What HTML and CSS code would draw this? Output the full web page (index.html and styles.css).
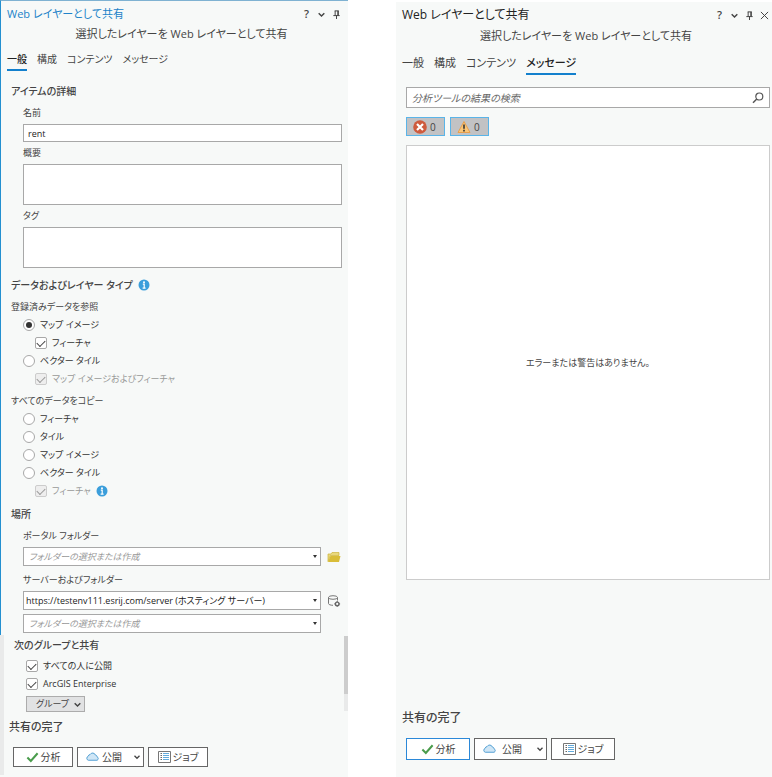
FILE: index.html
```html
<!DOCTYPE html>
<html lang="ja">
<head>
    <meta charset="UTF-8">
    <meta name="viewport" content="width=device-width, initial-scale=1.0">
    <title>Web レイヤーとして共有</title>
    <link rel="stylesheet" href="styles.css">
</head>
<body>
    <!-- shared icons -->
    <svg class="sprite" aria-hidden="true">
        <symbol id="chevron" viewBox="0 0 8 8"><path d="M1.500 2.800l2.500 2.500 2.500-2.500" fill="none" stroke="currentColor" stroke-width="1.300"/></symbol>
        <symbol id="pin" viewBox="0 0 10 10"><path d="M3 1h4.500M3.500 1v5M6.500 1v5M7 1v5M1.500 6.200h7M5 6v4" fill="none" stroke="currentColor" stroke-width="1.100"/></symbol>
        <symbol id="close" viewBox="0 0 10 10"><path d="M1 1l8 8M9 1L1 9" fill="none" stroke="currentColor" stroke-width="1.100"/></symbol>
        <symbol id="info" viewBox="0 0 12 12"><circle cx="6" cy="6" r="5.500" fill="#3b9edb"/><circle cx="6" cy="3.200" r="1" fill="#fff"/><path d="M4.800 5.200H6.200V9M4.600 9.200h3" fill="none" stroke="#fff" stroke-width="1.200"/></symbol>
        <symbol id="check" viewBox="0 0 14 12"><path d="M1.500 6.500l3.700 3.700L12.500 2" fill="none" stroke="#4a9c4c" stroke-width="2.200"/></symbol>
        <symbol id="cloud" viewBox="0 0 14 10"><path d="M2.500 8.500a2.200 2.200 0 0 1-.2-4.200A2.500 2.500 0 0 1 4.500 2.300a3 3 0 0 1 5.500.5 2.200 2.200 0 0 1 1.900 2A2 2 0 0 1 12 8.500z" fill="#cfe6f6" stroke="#4a9bd0"/></symbol>
        <symbol id="list" viewBox="0 0 13 12"><path d="M.5.5h12v11H.5z" fill="#fff" stroke="#777"/><path d="M2.500 2.500h1.500M2.500 4.500h1.500M2.500 6.500h1.500M2.500 8.500h1.500" stroke="#666"/><path d="M5 2.500h6M5 4.500h6M5 6.500h6M5 8.500h6" stroke="#62abdc"/></symbol>
        <symbol id="search" viewBox="0 0 12 12"><circle cx="7.300" cy="4.500" r="3.500" fill="none" stroke="#555" stroke-width="1.200"/><path d="M4.800 7L1 10.800" stroke="#555" stroke-width="1.500"/></symbol>
        <symbol id="error" viewBox="0 0 14 14"><circle cx="7" cy="7" r="6.800" fill="#ce5a3d"/><path d="M4 4l6 6M10 4l-6 6" stroke="#fff" stroke-width="2.200"/></symbol>
        <symbol id="warning" viewBox="0 0 14 14"><path d="M7 1.500l6 11H1z" fill="#fbc678" stroke="#e9a04c" stroke-linejoin="round"/><path d="M7 4.500v4.300M7 9.800v1.700" stroke="#333" stroke-width="1.600"/></symbol>
        <symbol id="folder" viewBox="0 0 14 11"><path d="M1 10V2.500h3L5 1h7v3H3.500z" fill="#e9d87c" stroke="#cdb53b" stroke-width=".7"/><path d="M1 10.500L3.500 4.500H13.500L12 10.500z" fill="#d9bd38"/></symbol>
        <symbol id="database" viewBox="0 0 13 12"><path d="M1 2.500v6c0 1 2 1.800 4.500 1.800M10 2.500v3" fill="none" stroke="#777"/><ellipse cx="5.500" cy="2.500" rx="4.500" ry="1.800" fill="none" stroke="#777"/><circle cx="9.700" cy="8.900" r="1.800" fill="none" stroke="#666" stroke-width="1.400"/><path d="M9.700 6v1M9.700 10.800v1M6.800 8.900h1M11.600 8.900h1" stroke="#666"/></symbol>
    </svg>

    <main class="panes">
        <section class="pane pane-general">
            <div class="pane-main">
                <header class="pane-header">
                    <h1>Web レイヤーとして共有</h1>
                    <div class="window-tools">
                        <button type="button" aria-label="ヘルプ">?</button>
                        <button type="button" aria-label="メニュー"><svg><use href="#chevron"/></svg></button>
                        <button type="button" aria-label="ピン留め"><svg><use href="#pin"/></svg></button>
                    </div>
                </header>
                <p class="subtitle">選択したレイヤーを Web レイヤーとして共有</p>
                <nav class="tabs">
                    <button type="button" class="tab active">一般</button>
                    <button type="button" class="tab">構成</button>
                    <button type="button" class="tab">コンテンツ</button>
                    <button type="button" class="tab">メッセージ</button>
                </nav>

                <form class="settings">
                    <h2>アイテムの詳細</h2>
                    <div class="fields">
                        <label for="name">名前</label>
                        <input type="text" id="name" value="rent">
                        <label for="summary">概要</label>
                        <textarea id="summary"></textarea>
                        <label for="tags">タグ</label>
                        <textarea id="tags"></textarea>
                    </div>

                    <h2>データおよびレイヤー タイプ <svg class="info"><use href="#info"/></svg></h2>
                    <fieldset>
                        <legend>登録済みデータを参照</legend>
                        <label class="option"><input type="radio" name="layerType" checked>マップ イメージ</label>
                        <label class="option nested"><input type="checkbox" checked>フィーチャ</label>
                        <label class="option"><input type="radio" name="layerType">ベクター タイル</label>
                        <label class="option nested disabled"><input type="checkbox" checked disabled>マップ イメージおよびフィーチャ</label>
                    </fieldset>
                    <fieldset>
                        <legend>すべてのデータをコピー</legend>
                        <label class="option"><input type="radio" name="layerType">フィーチャ</label>
                        <label class="option"><input type="radio" name="layerType">タイル</label>
                        <label class="option"><input type="radio" name="layerType">マップ イメージ</label>
                        <label class="option"><input type="radio" name="layerType">ベクター タイル</label>
                        <label class="option nested disabled"><input type="checkbox" checked disabled>フィーチャ <svg class="info"><use href="#info"/></svg></label>
                    </fieldset>

                    <h2>場所</h2>
                    <div class="location">
                        <label for="portalFolder">ポータル フォルダー</label>
                        <div class="select-row">
                            <div class="select placeholder">
                                <select id="portalFolder"><option>フォルダーの選択または作成</option></select>
                            </div>
                            <button type="button" class="icon-button" aria-label="フォルダーの作成"><svg><use href="#folder"/></svg></button>
                        </div>
                        <label for="server">サーバーおよびフォルダー</label>
                        <div class="select-row">
                            <div class="select">
                                <select id="server"><option>https://testenv111.esrij.com/server (ホスティング サーバー)</option></select>
                            </div>
                            <button type="button" class="icon-button" aria-label="データ ストアの管理"><svg><use href="#database"/></svg></button>
                        </div>
                        <div class="select-row">
                            <div class="select placeholder">
                                <select aria-label="サーバー フォルダー"><option>フォルダーの選択または作成</option></select>
                            </div>
                            <span class="icon-button"></span>
                        </div>
                    </div>
                </form>
            </div>

            <div class="pane-bottom">
                <div class="sharing">
                    <h2>次のグループと共有</h2>
                    <label class="option"><input type="checkbox" checked>すべての人に公開</label>
                    <label class="option"><input type="checkbox" checked>ArcGIS Enterprise</label>
                    <button type="button" class="group-button">グループ <svg><use href="#chevron"/></svg></button>
                </div>
                <footer>
                    <h2>共有の完了</h2>
                    <div class="actions">
                        <button type="button"><svg><use href="#check"/></svg>分析</button>
                        <button type="button" class="split"><svg><use href="#cloud"/></svg>公開<svg class="arrow"><use href="#chevron"/></svg></button>
                        <button type="button"><svg><use href="#list"/></svg>ジョブ</button>
                    </div>
                </footer>
            </div>
            <div class="scrollbar"></div>
        </section>

        <section class="pane pane-messages">
            <header class="pane-header">
                <h1>Web レイヤーとして共有</h1>
                <div class="window-tools">
                    <button type="button" aria-label="ヘルプ">?</button>
                    <button type="button" aria-label="メニュー"><svg><use href="#chevron"/></svg></button>
                    <button type="button" aria-label="ピン留め"><svg><use href="#pin"/></svg></button>
                    <button type="button" aria-label="閉じる"><svg><use href="#close"/></svg></button>
                </div>
            </header>
            <p class="subtitle">選択したレイヤーを Web レイヤーとして共有</p>
            <nav class="tabs">
                <button type="button" class="tab">一般</button>
                <button type="button" class="tab">構成</button>
                <button type="button" class="tab">コンテンツ</button>
                <button type="button" class="tab active">メッセージ</button>
            </nav>

            <div class="search">
                <input type="text" aria-label="検索" placeholder="分析ツールの結果の検索">
                <svg><use href="#search"/></svg>
            </div>
            <div class="filters">
                <button type="button"><svg><use href="#error"/></svg>0</button>
                <button type="button"><svg><use href="#warning"/></svg>0</button>
            </div>
            <div class="results">エラーまたは警告はありません。</div>

            <footer>
                <h2>共有の完了</h2>
                <div class="actions">
                    <button type="button" class="primary"><svg><use href="#check"/></svg>分析</button>
                    <button type="button" class="split"><svg><use href="#cloud"/></svg>公開<svg class="arrow"><use href="#chevron"/></svg></button>
                    <button type="button"><svg><use href="#list"/></svg>ジョブ</button>
                </div>
            </footer>
        </section>
    </main>
</body>
</html>
```
FILE: styles.css
```css
:root {
    --accent: #1380cd;
    --pane-bg: #f7f9f8;
    --text: #444;
    --muted: #999;
    --field-border: #a8a8a8;
}

* {
    box-sizing: border-box;
}

body {
    margin: 0;
    background: white;
    color: var(--text);
    font-family: "Open Sans", "Noto Sans CJK JP", sans-serif;
    font-size: 9px;
    line-height: 18px;
    font-feature-settings: "palt";
}

button,
input,
textarea,
select {
    margin: 0;
    font: inherit;
    font-feature-settings: inherit;
    color: inherit;
}

button {
    padding: 0;
    border: none;
    background: none;
    white-space: nowrap;
}

h1, h2, p {
    margin: 0;
}

h2 {
    font-size: 10px;
    font-weight: 500;
    line-height: 20px;
}

.sprite {
    display: none;
}

.panes {
    display: grid;
    grid-template-columns: 348fr 376fr;
    column-gap: 48px;
    min-height: 100vh;
}

.pane {
    background: var(--pane-bg);
}

/* Header */
.pane-header {
    display: flex;
    justify-content: space-between;
    align-items: center;
    height: 20px;
}

h1 {
    font-size: 11px;
    font-weight: 400;
    line-height: 20px;
}

.window-tools {
    display: flex;
    align-items: center;
    gap: 4px;
}

.window-tools button {
    display: flex;
    justify-content: center;
    align-items: center;
    width: 11px;
    height: 16px;
    font-size: 11px;
    font-weight: 600;
}

.window-tools svg {
    width: 9px;
    height: 9px;
}

.subtitle {
    padding-left: 14px;
    font-size: 11px;
    line-height: 20px;
    text-align: center;
}

.tabs {
    display: flex;
    gap: 10px;
}

.tab {
    border-bottom: 2px solid transparent;
    font-size: 10px;
    line-height: 20px;
}

.tab.active {
    border-color: var(--accent);
    font-weight: 500;
    color: #222;
}

/* General pane */
.pane-general {
    position: relative;
}

.pane-main {
    padding: 3px 6px 2px;
    border-top: 1px solid #7fb2d2;
    border-left: 1px solid #2490d0;
}

.pane-general h1 {
    color: #2183c9;
}

.pane-general .tabs {
    margin-top: 5px;
}

.settings {
    padding-left: 4px;
}

.settings h2 {
    display: flex;
    align-items: center;
    gap: 5px;
    margin: 4px 0 3px;
}

.settings h2:first-child {
    margin-top: 10px;
}

.info {
    width: 12px;
    height: 12px;
}

.fields,
.location {
    display: flex;
    flex-direction: column;
    gap: 2px;
    padding-left: 12px;
}

.fields {
    margin-bottom: 7px;
}

.fields input,
.fields textarea {
    display: block;
    width: 100%;
    padding: 0 4px;
    border: 1px solid var(--field-border);
    background: white;
    color: #222;
    resize: none;
}

.fields input {
    height: 18px;
    line-height: 16px;
}

.fields textarea {
    height: 41px;
}

fieldset {
    margin: 0 0 4px;
    padding: 0;
    border: none;
}

legend {
    padding: 0;
}

.option {
    display: flex;
    align-items: center;
    gap: 5px;
    padding-left: 12px;
    color: #333;
}

.option.nested {
    padding-left: 24px;
}

.option.disabled {
    color: var(--muted);
}

input[type="radio"],
input[type="checkbox"] {
    appearance: none;
    display: grid;
    place-content: center;
    width: 12px;
    height: 12px;
    border: 1px solid var(--field-border);
    border-radius: 2px;
    background: white;
}

input[type="radio"] {
    border-radius: 50%;
}

input[type="radio"]:checked::after {
    content: "";
    width: 6px;
    height: 6px;
    border-radius: 50%;
    background: #333;
}

input[type="checkbox"]:checked::after {
    content: "";
    width: 7px;
    height: 4px;
    margin-bottom: 2px;
    border: solid #444;
    border-width: 0 0 1px 1px;
    outline: 0;
    transform: rotate(-45deg);
}

input[type="checkbox"]:disabled {
    border-color: #ccc;
    background: #eee;
}

input[type="checkbox"]:disabled::after {
    border-color: #999;
}

.location label:not(:first-child) {
    margin-top: 3px;
}

.select-row {
    display: flex;
    align-items: center;
    gap: 6px;
}

.select-row + .select-row {
    margin-top: 2px;
}

.select {
    position: relative;
    flex: 1;
}

.select select {
    appearance: none;
    display: block;
    width: 100%;
    height: 19px;
    padding: 0 12px 0 2px;
    border: 1px solid var(--field-border);
    border-radius: 0;
    background: white;
    color: #222;
}

.select.placeholder select {
    padding-left: 5px;
    font-style: italic;
    color: var(--muted);
}

.select::after {
    content: "";
    position: absolute;
    top: 8px;
    right: 4px;
    border: 2px solid transparent;
    border-top: 3px solid #333;
    pointer-events: none;
}

.icon-button {
    display: flex;
    align-items: center;
    width: 15px;
    height: 18px;
}

.icon-button svg {
    width: 14px;
    height: 12px;
}

.pane-bottom {
    padding: 0 0 8px 5px;
    border-left: 4px solid #e9eaea;
}

.sharing {
    padding-left: 5px;
}

.sharing h2 {
    margin-bottom: 2px;
}

.group-button {
    display: flex;
    justify-content: space-between;
    align-items: center;
    width: 59px;
    height: 16px;
    margin: 3px 0 0 12px;
    padding: 0 2px 0 9px;
    border: 1px solid #acacac;
    background: #e1e2e3;
}

.group-button svg {
    width: 9px;
    height: 9px;
}

.pane-general footer {
    padding-top: 5px;
}

footer h2 {
    font-size: 11px;
}

.scrollbar {
    position: absolute;
    right: 0;
    bottom: 66px;
    width: 4px;
    height: 75px;
    border-bottom: 17px solid #e9eaea;
    background: #cdcdcd;
}

/* Footer buttons */
.actions {
    display: flex;
    gap: 4px;
    margin: 10px 4px 0;
    font-size: 10px;
}

.actions button {
    display: flex;
    justify-content: center;
    align-items: center;
    gap: 2px;
    width: 60px;
    height: 20px;
    border: 1px solid #666;
    background: white;
}

.actions svg {
    width: 13px;
    height: 12px;
}

.actions .split {
    justify-content: space-between;
    width: 67px;
    padding: 0 2px 0 8px;
}

.actions .arrow {
    width: 8px;
    height: 8px;
    margin-left: 8px;
}

.actions .primary {
    border-color: #2b88d8;
}

/* Messages pane */
.pane-messages {
    display: flex;
    flex-direction: column;
    margin-top: 2px;
    padding: 3px 2px 17px 6px;
    font-size: 10px;
}

.pane-messages h1 {
    font-size: 12px;
    color: #222;
}

.pane-messages .subtitle {
    margin-top: 1px;
    padding-left: 0;
}

.pane-messages .tabs {
    margin-top: 7px;
}

.pane-messages .tab {
    font-size: 11px;
}

.pane-messages h2 {
    font-size: 12px;
}

.search {
    display: flex;
    align-items: center;
    height: 21px;
    margin: 12px 0 0 4px;
    padding: 0 5px;
    border: 1px solid var(--field-border);
    background: white;
}

.search input {
    flex: 1;
    min-width: 0;
    padding: 0;
    border: none;
    outline: none;
    background: none;
}

.search input::placeholder {
    font-style: italic;
    color: #666;
}

.search svg {
    width: 12px;
    height: 12px;
}

.filters {
    display: flex;
    gap: 5px;
    margin: 9px 0 0 4px;
}

.filters button {
    display: flex;
    align-items: center;
    gap: 3px;
    width: 39px;
    height: 19px;
    padding-left: 6px;
    border: 1px solid #5ab4e8;
    background: #c2c2c4;
}

.filters svg {
    width: 14px;
    height: 14px;
}

.results {
    display: flex;
    flex: 1;
    justify-content: center;
    align-items: center;
    margin: 9px 0 128px 4px;
    border: 1px solid #ccc;
    background: white;
    font-size: 9px;
}

.pane-messages .actions button {
    width: 64px;
    height: 22px;
}

.pane-messages .actions .split {
    width: 73px;
}
```
